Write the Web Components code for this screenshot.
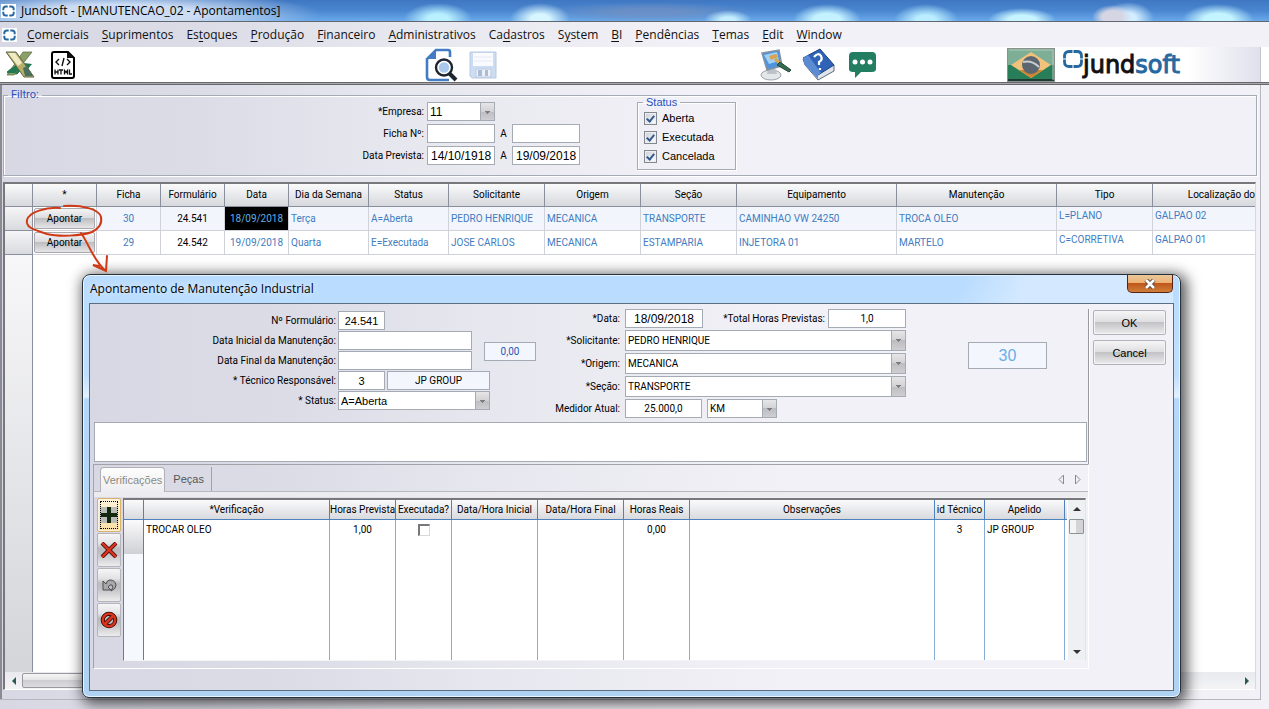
<!DOCTYPE html>
<html lang="pt-BR">
<head>
<meta charset="utf-8">
<title>Jundsoft - [MANUTENCAO_02 - Apontamentos]</title>
<style>
  :root {
    --ui: Roboto, "Liberation Sans", sans-serif;
    --wide: "Liberation Sans", Arial, sans-serif;
    --caption: "Open Sans", "Noto Sans", sans-serif;
    --small: 10px;
    --large: 11px;
    --date: 12px;
    --line: #a5abb5;
    --wash: linear-gradient(to right, #d8d8e4 0, #dcdce7 200px, #e6e6ee 380px, #f2f1f7 700px);
  }
  body { margin: 0; font: var(--small)/14px var(--ui); color: #000; background: #f2f1f7; }
</style>
</head>
<body>
<jund-app></jund-app>
<script>
const controlCss = `
  * { box-sizing: border-box; }
  input, select {
    font: var(--small)/14px var(--ui); color: #000; background: #fff; border: 1px solid var(--line);
    border-radius: 0; margin: 0; padding: 0 3px; height: 19px; outline: none; flex: none;
  }
  input.mid { text-align: center; }
  input.big, select.big { font: var(--large)/14px var(--wide); }
  input.date, select.date { font: var(--date)/14px var(--wide); }
  input[readonly] { background: #f3f7fd; }
  select {
    appearance: none; padding: 0 16px 0 2px;
    background:
      linear-gradient(#7b7b82, #7b7b82) right 4px top 8px / 5px 1px no-repeat,
      linear-gradient(#7b7b82, #7b7b82) right 5px top 9px / 3px 1px no-repeat,
      linear-gradient(#7b7b82, #7b7b82) right 6px top 10px / 1px 1px no-repeat,
      linear-gradient(#e6e6e8, #d2d2d5 50%, #bdbdc1 50%, #cfcfd2) right / 13px 100% no-repeat,
      linear-gradient(var(--line), var(--line)) right 13px top / 1px 100% no-repeat, #fff;
  }
  label { white-space: nowrap; }
`;
const define = (name, css, html) => customElements.define(name, class extends HTMLElement {
  constructor() {
    super();
    this.attachShadow({ mode: 'open' }).innerHTML = `<style>${css}</style>${html}`;
  }
});

/* ---------- form building blocks ---------- */
const controlMarkup = host => {
  const cls = host.getAttribute('look') || '';
  const value = host.getAttribute('value') || '';
  const name = host.getAttribute('name-text');
  const aria = name ? ` aria-label="${name}"` : '';
  const style = `style="width:${host.getAttribute('w')}px;height:${host.getAttribute('h') || 19}px"`;
  return host.getAttribute('kind') === 'select'
    ? `<select id="c" class="${cls}"${aria} ${style}><option>${value}</option></select>`
    : `<input id="c" type="text" class="${cls}"${aria} value="${value}" ${style}${host.hasAttribute('fixed') ? ' readonly' : ''}>`;
};
customElements.define('form-field', class extends HTMLElement {
  constructor() {
    super();
    this.attachShadow({ mode: 'open' });
  }
  connectedCallback() {
    this.shadowRoot.innerHTML = `<style>${controlCss}
      :host { display: contents; }
      label { grid-column: 1; text-align: right; align-self: center; }
      div { grid-column: 2; display: flex; align-items: center; gap: var(--field-gap, 2px); }
    </style><label for="c">${this.getAttribute('label')}</label><div>${controlMarkup(this)}<slot></slot></div>`;
  }
});
customElements.define('value-box', class extends HTMLElement {
  constructor() {
    super();
    this.attachShadow({ mode: 'open' });
  }
  connectedCallback() {
    this.shadowRoot.innerHTML = `<style>${controlCss}
      :host { display: block; flex: none; }
      input, select { display: block; }
      :host([tone="blue"]) input { color: #1f57b5; }
      :host([tone="sky"]) input { color: #6aaee8; font: 16px/20px "Liberation Sans", sans-serif; }
    </style>${controlMarkup(this)}`;
  }
});
define('status-check', `
  :host { display: block; }
  label { display: flex; align-items: center; gap: 5px; font: var(--large)/19px var(--wide); }
  input { appearance: none; box-sizing: border-box; width: 13px; height: 13px; margin: 0; border: 1px solid #84898f;
    background: linear-gradient(135deg, #c9ced6, #fff); box-shadow: inset 0 0 0 1px #eceef1; display: grid; place-items: center; }
  input:checked::after { content: ""; width: 3px; height: 6px; border: solid #36598f; border-width: 0 2px 2px 0; rotate: 40deg; margin-top: -2px; }
`, `<label><input type="checkbox" checked><slot></slot></label>`);

/* ---------- window chrome ---------- */
const brandRing = `<svg viewBox="0 0 20 18" aria-hidden="true"><g fill="none" stroke="#2668a0" stroke-width="3">
  <path d="M8.800 2H6Q2 2 2 6v2M11.200 2H14q4 0 4 4v2M8.800 16H6q-4 0-4-4v-2M11.200 16H14q4 0 4-4v-2"/></g></svg>`;
define('title-bar', `
  :host { display: flex; align-items: center; gap: 5px; height: 21px; padding-left: 1px; border-bottom: 1px solid #62676f;
    font: 12px/20px var(--caption); overflow: hidden;
    background:
      radial-gradient(ellipse 34px 16px at 438px 19px, #b9f0ff 30%, transparent),
      radial-gradient(ellipse 30px 16px at 540px 19px, #d8f6ff 30%, transparent),
      radial-gradient(ellipse 24px 10px at 728px 20px, #c4eeff 30%, transparent),
      radial-gradient(ellipse 34px 16px at 827px 20px, #c4f2ff 40%, transparent),
      radial-gradient(ellipse 32px 16px at 926px 20px, #b9edff 30%, transparent),
      radial-gradient(ellipse 34px 12px at 1022px 20px, #c8f4ff 40%, transparent),
      radial-gradient(ellipse 20px 12px at 1112px 17px, #d5d5e4 50%, transparent),
      radial-gradient(ellipse 26px 16px at 1128px 18px, #d4eeff 30%, transparent),
      radial-gradient(ellipse 36px 16px at 1218px 20px, #c4f4ff 40%, transparent),
      radial-gradient(ellipse 110px 10px at 650px 12px, #7391c2bb 30%, transparent),
      radial-gradient(ellipse 200px 24px at 120px 14px, #ccdcf2 40%, transparent),
      linear-gradient(#3f77c2, #4a86d0 50%, #69a9ea); }
  svg { width: 13px; height: 12px; background: #fff; padding: 1px; }
`, `${brandRing}<span>Jundsoft - [MANUTENCAO_02 - Apontamentos]</span>`);

const menus = [['', 'C', 'omerciais'], ['', 'S', 'uprimentos'], ['Es', 't', 'oques'], ['', 'P', 'rodução'], ['', 'F', 'inanceiro'],
  ['', 'A', 'dministrativos'], ['Ca', 'd', 'astros'], ['S', 'y', 'stem'], ['', 'B', 'I'], ['', 'P', 'endências'], ['', 'T', 'emas'], ['', 'E', 'dit'], ['', 'W', 'indow']];
define('menu-bar', `
  :host { display: flex; align-items: center; height: 25px; padding-left: 2px; background: var(--wash); font: 12px/24px var(--caption); }
  svg { width: 13px; height: 12px; background: #fff; padding: 1px; margin-right: 10px; }
  nav { display: flex; gap: 13px; }
  a { color: #111; text-decoration: none; white-space: nowrap; }
  u { text-underline-offset: 2px; }
`, `${brandRing}<nav>${menus.map(([a, b, c]) => `<a href="#">${a}<u>${b}</u>${c}</a>`).join('')}</nav>`);

define('tool-bar', `
  :host { display: flex; align-items: center; height: 35px; background: #fff; border-bottom: 1px solid #68686c; box-shadow: 0 1px #a9a9ad, 0 2px #68686c; margin-bottom: 2px; }
  .group { display: flex; align-items: center; }
  button { border: 0; padding: 0; margin: 0; background: none; display: block; }
  svg { display: block; }
  .files { padding-left: 5px; gap: 15px; width: 419px; box-sizing: border-box; }
  .record { gap: 11px; flex: 0 0 341px; }
  .help { gap: 9px; }
  .brand { margin-left: auto; height: 35px; flex: 0 0 262px; gap: 8px; }
  .logo { display: flex; align-items: flex-start; font: 24px/36px "DejaVu Sans", sans-serif; color: #111; }
  .logo svg { margin-top: 3px; }
  .logo b { font-weight: 400; color: #2668a0; -webkit-text-stroke: 1px #2668a0; }
  .logo span { -webkit-text-stroke: 1px #111; }
  .fade { flex: 1; align-self: stretch; margin-right: 8px; border-right: 1px solid #c4c4cc; background: linear-gradient(to right, #fff, #dfe0ec); }
`, `
<div class="group files">
  <button aria-label="Exportar Excel"><svg width="30" height="28" viewBox="0 0 30 28"><path d="M2 21 13 12l5 5-6 6H4z" fill="#1f7a54" stroke="#285040" stroke-width=".7"/><path d="M19 12l8 1-5 6z" fill="#237650"/><path d="M18 1h9L9 24H2z" fill="#8d9f69" stroke="#5f7446" stroke-width=".8"/><path d="M2 21l9-7 4 3-5 5H3z" fill="#1f7a54"/><path d="M1 1h10l18 25H19z" fill="#b7ae69" stroke="#59694a"/><path d="M3 2h7l7 10-4 3z" fill="#f1eac4"/><path d="m18 17 4-2 6 10h-8z" fill="#4b6f5b"/></svg></button>
  <button aria-label="Exportar HTML"><svg width="26" height="30" viewBox="0 0 26 30"><path d="M4 2h14l6 6v18q0 2-2 2H4q-2 0-2-2V4q0-2 2-2z" fill="#fff" stroke="#000" stroke-width="2"/><path d="M17 2v6h7z" fill="#111"/><path d="m9 9-3 3 3 3m8-6 3 3-3 3m-3-7-2 8" fill="none" stroke="#111" stroke-width="1.400"/><path d="M5 19.500v5m3-5v5m-3-2.500h3M9 20h4m-2 0v4.500M14.500 24.500v-4l1.500 2 1.500-2v4M19.500 19.500V24H22" fill="none" stroke="#111" stroke-width="1.300"/></svg></button>
</div>
<div class="group record">
  <button aria-label="Pesquisar" style="margin-left:5px"><svg width="34" height="34" viewBox="0 0 34 34"><path d="M26 9V4q0-2-2-2H12L3 11v18q0 3 3 3h19" fill="none" stroke="#417cc4" stroke-width="2.600"/><path d="M12 1v10H2z" fill="#417cc4"/><path d="m25 25 7 7" stroke="#1e252e" stroke-width="4"/><circle cx="20" cy="19.500" r="8" fill="#fff" stroke="#1e252e" stroke-width="2.400"/><circle cx="20" cy="19.500" r="5.200" fill="#a9c8ec"/></svg></button>
  <button aria-label="Salvar"><svg width="28" height="28" viewBox="0 0 28 28"><path d="M1 1h26v26H3l-2-2z" fill="#ccdcf2" stroke="#b9c9e2"/><path d="M4 2h20v13H4z" fill="#fafbfe"/><path d="M5 6h18M5 10h18" stroke="#e5ebf5"/><path d="M7 18h15v8H7z" fill="#eef1f6" stroke="#bdcbe0"/><path d="M9 19h4v6H9zM16 19h3v6h-3z" fill="#a9bddb"/></svg></button>
</div>
<div class="group help">
  <button aria-label="Aparência"><svg width="33" height="33" viewBox="0 0 33 33"><ellipse cx="11" cy="27" rx="10" ry="5" fill="#e4e7ea" stroke="#9aa1a9"/><path d="M8 20h7l2 6H7z" fill="#bcc2c8"/><path d="m2 5 17-3 3 16-15 4z" fill="#4f93dc" stroke="#8694a0" stroke-width="1.500"/><path d="m4 7 13-3 2 9-10 3z" fill="#9fd0f5"/><path d="m9 8 7-2 2 3-7 3z" fill="#dba34c"/><path d="m15 11 6 5" stroke="#d4a54f" stroke-width="3"/><path d="m20 14 11 8-2 2-12-7z" fill="#356c50" stroke="#24483a"/></svg></button>
  <button aria-label="Ajuda"><svg width="34" height="33" viewBox="0 0 34 33"><path d="m1 11 2 6 13 15 16-9v-6z" fill="#dfe3ea" stroke="#5f6d80"/><path d="m1 10 17-9 14 16-16 10z" fill="#2f63b8" stroke="#1c437f"/><path d="m1 10 5-3 13 18-3 2v4L3 17z" fill="#5b8cd3"/><path d="M12 9q4-5 7-1 2 4-2 6v3M18 20v2" fill="none" stroke="#fff" stroke-width="2.200"/></svg></button>
  <button aria-label="Mensagens" style="margin-left:4px"><svg width="27" height="26" viewBox="0 0 27 26"><path d="M4 0h19q4 0 4 4v13q0 3-4 3H12l-6 6v-6H4q-4 0-4-3V4q0-4 4-4z" fill="#237d61"/><g fill="#fff"><circle cx="6" cy="10" r="2.500"/><circle cx="13.500" cy="10" r="2.500"/><circle cx="21" cy="10" r="2.500"/></g></svg></button>
</div>
<div class="group brand">
  <button aria-label="Idioma: Português"><svg width="48" height="34" viewBox="0 0 48 34"><path d="M0 0h48v34H0z" fill="#8a918d"/><path d="M1 1h46v16H1z" fill="#7fae97"/><path d="M1 17h46v14H1z" fill="#277e59"/><path d="M1 31h46v2H1z" fill="#1d3b33"/><path d="M2 2h44v30" fill="none" stroke="#adc9bb"/><path d="M24 4 44 17 24 30 4 17z" fill="#f0c27c"/><path d="M12 22 24 30l12-8z" fill="#cf8430"/><circle cx="24" cy="17" r="9" fill="#5c6670"/><path d="M16 14q9-2 16 5" fill="none" stroke="#c8ced2" stroke-width="2"/></svg></button>
  <div class="logo"><svg width="20" height="18" viewBox="0 0 20 18"><g fill="none" stroke="#2668a0" stroke-width="2.800"><path d="M9.500 1.500H6Q1.500 1.500 1.500 6v2.500M10.500 1.500H14q4.500 0 4.500 4.500v2.500M9.500 16.500H6q-4.500 0-4.500-4.500V9.500M10.500 16.500H14q4.500 0 4.500-4.500V9.500"/></g></svg><span>jund<b>soft</b></span></div>
  <div class="fade"></div>
</div>`);

/* ---------- filter ---------- */
define('filter-panel', `${controlCss}
  :host { display: block; }
  fieldset { border: 1px solid var(--line); margin: 0; padding: 0; min-width: 0; box-shadow: inset 1px 1px #fff, 1px 1px #fff; }
  legend { font: var(--large)/14px var(--ui); color: #2552c0; padding: 0 3px; margin-left: 4px; }
  .outer { display: flex; align-items: flex-start; height: 88px; }
  .fields { display: grid; grid-template-columns: 420px 153px; column-gap: 3px; row-gap: 3px; --field-gap: 5px; }
  .fields span { width: 7px; text-align: center; }
  .status { width: 99px; height: 75px; margin-left: 57px; margin-top: -7px; }
  .status legend { font-family: var(--wide); margin-left: 5px; }
  .status div { display: grid; padding-left: 6px; }
`, `
<fieldset class="outer"><legend>Filtro:</legend>
  <div class="fields">
    <form-field label="*Empresa:" kind="select" value="11" look="date" w="68"></form-field>
    <form-field label="Ficha Nº:" w="68"><span>A</span><value-box name-text="Ficha Nº até" w="68"></value-box></form-field>
    <form-field label="Data Prevista:" look="date mid" value="14/10/1918" w="68"><span>A</span><value-box name-text="Data Prevista até" look="date mid" value="19/09/2018" w="68"></value-box></form-field>
  </div>
  <fieldset class="status"><legend>Status</legend>
    <div><status-check>Aberta</status-check><status-check>Executada</status-check><status-check>Cancelada</status-check></div>
  </fieldset>
</fieldset>`);

/* ---------- main grid ---------- */
const cols = [['*', 64], ['Ficha', 64], ['Formulário', 64], ['Data', 64], ['Dia da Semana', 80], ['Status', 80], ['Solicitante', 96], ['Origem', 96],
  ['Seção', 96], ['Equipamento', 160], ['Manutenção', 160], ['Tipo', 96]];
const records = [
  ['30', '24.541', '18/09/2018', 'Terça', 'A=Aberta', 'PEDRO HENRIQUE', 'MECANICA', 'TRANSPORTE', 'CAMINHAO VW 24250', 'TROCA OLEO', 'L=PLANO', 'GALPAO 02'],
  ['29', '24.542', '19/09/2018', 'Quarta', 'E=Executada', 'JOSE CARLOS', 'MECANICA', 'ESTAMPARIA', 'INJETORA 01', 'MARTELO', 'C=CORRETIVA', 'GALPAO 01']];
define('order-grid', `
  * { box-sizing: border-box; }
  :host { display: flex; flex-direction: column; border: 2px solid #77777c; border-width: 2px 1px 1px 2px; border-right-color: #d8d8de; border-bottom-color: #fff; background: #fff; overflow: hidden; }
  table { border-collapse: separate; border-spacing: 0; table-layout: fixed; width: 100%; }
  th { height: 23px; padding: 0; font-weight: 400; white-space: nowrap; overflow: hidden; background: linear-gradient(#fafafb, #d6d8dd);
    border-bottom: 1px solid #8a8f9e; border-right: 1px solid #8a8f9e; }
  th:last-child { text-align: right; border-right: 0; }
  td { height: 24px; padding: 0 2px; color: #3f7cc0; white-space: nowrap; overflow: hidden; border: solid #d0d2da; border-width: 0 1px 1px 0; }
  tr.active td { background: #f2f6fc; }
  td.head, tr.active td.head { background: linear-gradient(#f6f6f8, #d9dadf); border-color: #8a8f9e; }
  td.act, tr.active td.act { padding: 1px; background: #fff; }
  td.c { text-align: center; }
  td.k { color: #000; }
  tr.active td.sel { background: #000; color: #5cb0e8; }
  td.t { vertical-align: top; padding-top: 2px; }
  td:last-child { border-right: 0; }
  button { display: block; width: 100%; height: 21px; padding: 0; font: inherit; border: 1px solid #a9a9ae; border-radius: 2px;
    background: linear-gradient(#f4f4f5, #dcdcde 48%, #bebec1 50%, #e6e6e8); }
  .rest { flex: 1; width: 28px; border-right: 1px solid #8a8f9e; background: linear-gradient(#f7f7f9, #d4d5d9); }
  .scroll { display: flex; align-items: center; justify-content: space-between; height: 17px; background: linear-gradient(#e9eaee, #f4f4f6); padding-right: 6px; }
  .scroll i { border: 4px solid transparent; width: 0; height: 0; }
  .scroll .l { border-right: 4px solid #2c5a52; border-left: 0; margin-left: 7px; }
  .scroll .r { border-left: 4px solid #2c5a52; border-right: 0; }
  .thumb { flex: none; width: 550px; height: 15px; margin: 0 auto 0 6px; border: 1px solid #98989e; border-radius: 2px; background: linear-gradient(#f5f5f6, #e4e4e6 48%, #cfcfd3 50%, #dcdce0); }
`, `
<table>
  <colgroup><col style="width:28px">${cols.map(c => `<col style="width:${c[1]}px">`).join('')}<col></colgroup>
  <thead><tr><th></th>${cols.map(c => `<th>${c[0]}</th>`).join('')}<th>Localização do</th></tr></thead>
  <tbody>${records.map((r, i) => `<tr class="${i ? '' : 'active'}"><td class="head"></td><td class="act"><button>Apontar</button></td>${
    r.map((v, j) => `<td class="${['c', 'c k', 'c sel'][j] || (j > 9 ? 't' : '')}">${v}</td>`).join('')}</tr>`).join('')}</tbody>
</table>
<div class="rest"></div>
<div class="scroll"><i class="l"></i><div class="thumb"></div><i class="r"></i></div>`);

/* ---------- checks table in the dialog ---------- */
const checkCols = [['*Verificação', 186], ['Horas Prevista', 66], ['Executada?', 56], ['Data/Hora Inicial', 86], ['Data/Hora Final', 86], ['Horas Reais', 66],
  ['Observações', 0], ['id Técnico', 50], ['Apelido', 80], ['', 2]];
define('check-grid', `
  * { box-sizing: border-box; }
  :host { display: flex; height: 163px; background: #fff; border: 2px solid #77777c; border-width: 2px 1px 1px 1px; border-right-color: #e4e4e8; border-bottom-color: #f4f4f6; overflow: hidden; }
  table { flex: 1; height: 160px; border-collapse: separate; border-spacing: 0; table-layout: fixed; width: 100px; }
  th { height: 20px; padding: 0; font-weight: 400; white-space: nowrap; background: linear-gradient(#fafafb, #d9dade); border: solid #4d82bd; border-width: 0 1px 1px 0; }
  td { padding: 0 2px; height: 20px; white-space: nowrap; border-right: 1px solid #86acd8; }
  td.head { border-right-color: #4d82bd; background: linear-gradient(#fafafb, #cfd0d5) top / 100% 34px no-repeat, #f5f8fd; }
  td.c { text-align: center; }
  th:last-child, td:last-child { border-right: 0; }
  input { appearance: none; display: block; width: 12px; height: 12px; margin: 0 auto; border: 1px solid #d9d9d9; border-top: 2px solid #77777c; border-left: 2px solid #77777c; }
  .bar { width: 17px; margin-left: 1px; background: #eff0f2; display: flex; flex-direction: column; align-items: center; }
  .bar i { width: 0; height: 0; border: 4px solid transparent; }
  .up { border-bottom-color: #333 !important; border-top: 0 !important; margin: 7px 0 8px; }
  .down { border-top-color: #333 !important; border-bottom: 0 !important; margin: auto 0 6px; }
  .thumb { width: 15px; height: 15px; border: 1px solid #8b9493; border-radius: 1px; background: linear-gradient(to right, #f4f4f4 50%, #d4d4d8 50%); }
`, `
<table>
  <colgroup><col style="width:20px">${checkCols.map(c => `<col${c[1] ? ` style="width:${c[1]}px"` : ''}>`).join('')}</colgroup>
  <thead><tr><th></th>${checkCols.map(c => `<th>${c[0]}</th>`).join('')}</tr></thead>
  <tbody>
    <tr><td class="head" rowspan="2"></td><td>TROCAR OLEO</td><td class="c">1,00</td><td><input type="checkbox" aria-label="Executada?"></td><td></td><td></td><td class="c">0,00</td><td></td><td class="c">3</td><td>JP GROUP</td><td></td></tr>
    <tr style="height:120px">${'<td></td>'.repeat(10)}</tr>
  </tbody>
</table>
<div class="bar"><i class="up"></i><div class="thumb"></div><i class="down"></i></div>`);

/* ---------- dialog ---------- */
define('order-dialog', `${controlCss}
  :host { box-sizing: border-box; display: block; border: 1px solid #26313c; border-radius: 8px 8px 7px 7px; padding: 0 6px 6px;
    background: linear-gradient(#b9dcfe 0, #bfdffe 100px, #e2f1ff 122px, #b4d8fb 124px, #b0d2f2);
    box-shadow: inset 0 0 0 1px #e8f5ff, 3px 3px 14px 3px rgba(0,0,0,.65); }
  button { font: var(--large)/16px var(--wide); padding: 0; margin: 0; }
  header { display: flex; justify-content: space-between; height: 28px; font: 12px/28px var(--caption); margin-right: 1px;
    background: linear-gradient(115deg, transparent 80%, #d4e9ff 86%); }
  header button { width: 46px; height: 18px; border: 1px solid #58221a; border-top: 0; border-radius: 0 0 5px 5px; display: grid; place-items: center;
    background: linear-gradient(#e9c79a, #efb274 45%, #c0561c 50%, #cf8038); }
  h1 { font: inherit; margin: 0 0 0 1px; text-shadow: 0 0 6px #fff; }
  .body { border: 1px solid #5c6e80; background: var(--wash); height: 388px; }
  .top { display: flex; padding-top: 5px; height: 160px; }
  .entry { flex: 1; display: flex; flex-direction: column; min-width: 0; }
  .groups { display: flex; align-items: flex-start; height: 113px; }
  .left { display: grid; grid-template-columns: 246px 144px 52px; grid-auto-rows: 19px; gap: 1px 2px; margin-top: 2px; align-items: center; }
  .left .hours { grid-column: 3; grid-row: 2 / 4; margin-top: 2px; }
  .right { display: grid; grid-template-columns: 84px 281px; grid-template-rows: 19px 21px 21px 21px 19px; gap: 2px 5px; align-items: center; --field-gap: 5px; }
  .total { display: flex; align-items: center; gap: 3px; flex: 1; justify-content: flex-end; }
  .number { margin: 33px auto 0 62px; }
  textarea { display: block; height: 40px; margin: 0 1px 0 4px; border: 1px solid var(--line); resize: none; padding: 2px; font: inherit; }
  aside { flex: none; width: 85px; padding: 1px 0 0 4px; border-left: 1px solid #98989e; box-shadow: inset 1px 0 #fff; display: flex; flex-direction: column; gap: 5px; }
  aside button { width: 73px; height: 25px; border: 1px solid #b0b4ba; border-radius: 2px; background: linear-gradient(#f6f6f7, #dedee0 48%, #c3c3c6 50%, #ececee); box-shadow: inset 0 0 0 1px #f4f4f5; }
  .tabs { margin: 0 84px 0 3px; border: 1px solid #a2a2a8; border-right-color: #fff; border-bottom-color: #fff; height: 205px; }
  .strip { display: flex; align-items: flex-end; height: 27px; padding: 0 6px; border-bottom: 1px solid #b8b8be; }
  .strip button { height: 24px; border: 0; background: none; color: #555; border-right: 1px solid #a2a2a8; padding: 0 7px 0 8px; }
  .strip button.on { background: linear-gradient(#fdfdfd, #eeeef2); color: #8a8a80; border: 1px solid #b0b0b6; border-bottom: 0; border-radius: 4px 4px 0 0; padding: 0 2px; height: 25px; margin-bottom: -1px; }
  .strip svg { margin: 0 0 6px auto; }
  .page { display: flex; gap: 2px; padding: 6px 2px 0 3px; box-shadow: inset 0 5px #ececf0; }
  .tools { display: flex; flex-direction: column; gap: 1px; }
  .tools button { width: 24px; height: 34px; border: 1px solid #b4b4ba; border-radius: 2px; display: grid; place-items: center; background: linear-gradient(#f6f6f7, #e2e2e4 30%, #bcbcbf 45%, #c0c0c3 60%, #ededee); }
  .tools button:first-child { border-color: #d9b36a; background: linear-gradient(#fdf3dc, #f8dfa2); box-shadow: inset 0 0 0 1px #fdf3dc; outline: 1px dotted #000; outline-offset: -4px; }
  .tools button:first-child svg { background: #bdbdb8; }
  check-grid { flex: 1; }
`, `
<header><h1>Apontamento de Manutenção Industrial</h1>
  <button aria-label="Fechar"><svg width="12" height="10" viewBox="0 0 12 10"><path d="m2 1 8 8m0-8L2 9" stroke="#5a4840" stroke-width="4.500"/><path d="m2 1 8 8m0-8L2 9" stroke="#fff" stroke-width="2.600"/></svg></button></header>
<div class="body">
  <div class="top">
    <div class="entry">
      <div class="groups">
        <div class="left">
          <form-field label="Nº Formulário:" look="big mid" value="24.541" w="47"></form-field>
          <form-field label="Data Inicial da Manutenção:" w="134"></form-field>
          <form-field label="Data Final da Manutenção:" w="134"></form-field>
          <form-field label="* Técnico Responsável:" look="big mid" value="3" w="47"><value-box name-text="Nome do técnico" look="mid" value="JP GROUP" w="103" fixed></value-box></form-field>
          <form-field label="* Status:" kind="select" look="big" value="A=Aberta" w="152"></form-field>
          <value-box class="hours" name-text="Horas" tone="blue" look="mid" value="0,00" w="52" fixed></value-box>
        </div>
        <div class="right">
          <form-field label="*Data:" look="date mid" value="18/09/2018" w="78"><div class="total"><label for="total">*Total Horas Previstas:</label><input id="total" class="mid" type="text" value="1,0" style="width:78px"></div></form-field>
          <form-field label="*Solicitante:" kind="select" value="PEDRO HENRIQUE" w="281" h="21"></form-field>
          <form-field label="*Origem:" kind="select" value="MECANICA" w="281" h="21"></form-field>
          <form-field label="*Seção:" kind="select" value="TRANSPORTE" w="281" h="21"></form-field>
          <form-field label="Medidor Atual:" look="mid" value="25.000,0" w="77"><value-box kind="select" name-text="Unidade" value="KM" w="70"></value-box></form-field>
        </div>
        <value-box class="number" name-text="Ficha" tone="sky" look="mid" value="30" w="79" h="27" fixed></value-box>
      </div>
      <textarea aria-label="Observação"></textarea>
    </div>
    <aside><button>OK</button><button>Cancel</button></aside>
  </div>
  <div class="tabs">
    <div class="strip"><button class="on">Verificações</button><button>Peças</button>
      <svg width="24" height="11" viewBox="0 0 24 11"><path d="M5.500 1v9L1 5.500zM17.500 1v9L22 5.500z" fill="none" stroke="#8a8a90"/></svg></div>
    <div class="page">
      <div class="tools">
        <button aria-label="Incluir"><svg width="18" height="16" viewBox="0 0 18 16"><path d="M9 0v16M1 8h16" stroke="#14280f" stroke-width="4"/></svg></button>
        <button aria-label="Excluir"><svg width="18" height="16" viewBox="0 0 18 16"><path d="m2 1 14 14M16 1 2 15" stroke="#2a0a06" stroke-width="4"/><path d="m2 1 14 14M16 1 2 15" stroke="#d8321c" stroke-width="2.600"/></svg></button>
        <button aria-label="Desfazer"><svg width="15" height="13" viewBox="0 0 15 13"><path d="M1 2v9h8L6 8q2-3 4-2 2 2-1 6 5-2 5-6-1-5-6-5-3 0-4 4z" fill="#a8a8ac" stroke="#4d4d52"/></svg></button>
        <button aria-label="Cancelar"><svg width="18" height="18" viewBox="0 0 18 18"><g fill="none" stroke="#2a0a06" stroke-width="4.200"><circle cx="9" cy="9" r="6.200"/><path d="m4.500 13.500 9-9"/></g><g fill="none" stroke="#d8321c" stroke-width="2.600"><circle cx="9" cy="9" r="6.200"/><path d="m4.500 13.500 9-9"/></g></svg></button>
      </div>
      <check-grid></check-grid>
    </div>
  </div>
</div>`);

/* ---------- application shell ---------- */
define('jund-app', `
  :host { display: flex; flex-direction: column; min-height: 100vh; position: relative; background: var(--wash); }
  main { flex: 1; display: flex; flex-direction: column; margin: 0 8px 9px 0; border: 1px solid #b6b6be; border-width: 0 1px 1px 0; box-shadow: inset 2px 0 #8a8a90; padding: 3px 3px 9px; }
  filter-panel { margin-bottom: 6px; }
  order-grid { flex: 1; margin-right: 1px; }
  order-dialog { position: absolute; left: 82px; right: 88px; top: 274px; }
  .ink { position: absolute; left: 24px; top: 202px; pointer-events: none; }
`, `
<title-bar></title-bar><menu-bar></menu-bar><tool-bar></tool-bar>
<main><filter-panel></filter-panel><order-grid></order-grid></main>
<order-dialog></order-dialog>
<svg class="ink" width="88" height="74" viewBox="0 0 88 74" aria-hidden="true"><g fill="none" stroke="#cf3a16" stroke-width="2" stroke-linecap="round"><path d="M36 6C22 5 5 10 3 18s9 10 20 14c12 3 34 2 45-2 8-4 10-10 9-15C75 7 58 3 40 4"/><path d="M57 31C64 40 70 60 82 69M83 54l-1 15-13-6 6 1"/></g></svg>`);
</script>
</body>
</html>
